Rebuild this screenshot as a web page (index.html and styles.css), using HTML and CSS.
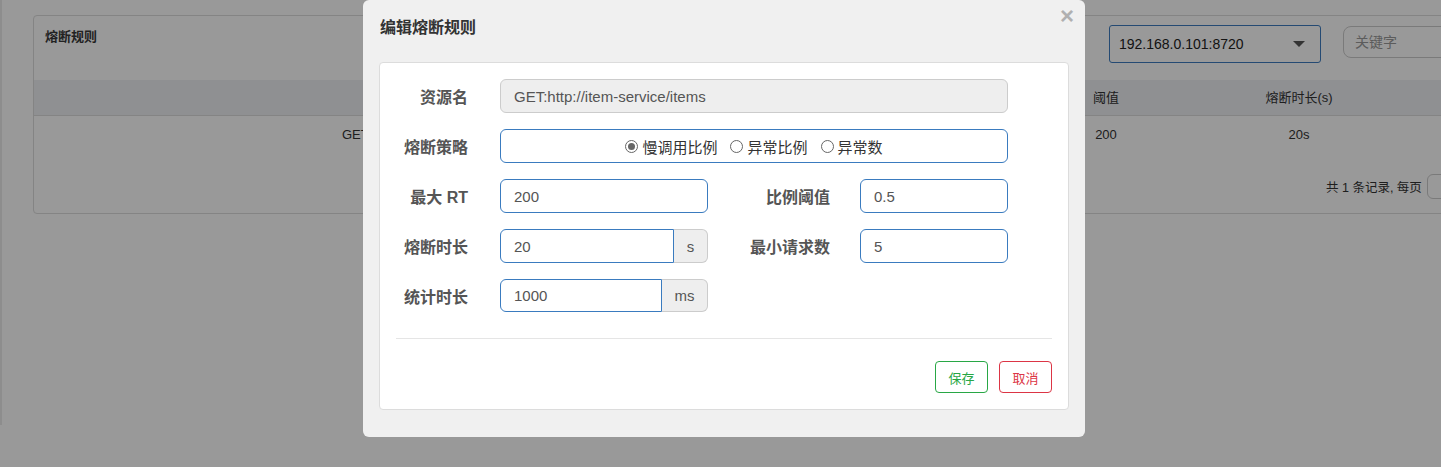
FILE: index.html
```html
<!DOCTYPE html>
<html lang="zh">
<head>
<meta charset="utf-8">
<title>编辑熔断规则</title>
<link rel="stylesheet" href="styles.css">
</head>
<body>
<div class="page">
  <div class="panel">
    <div class="panel-head">
      <div class="panel-title">熔断规则</div>
      <div class="machine-select"><span>192.168.0.101:8720</span><i class="caret"></i></div>
      <div class="search">关键字</div>
    </div>
    <div class="table">
      <div class="tr th">
        <div class="td"></div>
        <div class="td"></div>
        <div class="td">阈值</div>
        <div class="td">熔断时长(s)</div>
        <div class="td"></div>
      </div>
      <div class="tr">
        <div class="td">GET:http://item-service/items</div>
        <div class="td"></div>
        <div class="td">200</div>
        <div class="td">20s</div>
        <div class="td"></div>
      </div>
    </div>
    <div class="pager">
      <span>共 1 条记录, 每页</span><span class="pager-box"></span>
    </div>
  </div>
</div>

<div class="overlay"></div>

<div class="modal">
  <div class="modal-head">
    <div class="modal-title">编辑熔断规则</div>
    <span class="close">×</span>
  </div>
  <div class="modal-box">
    <div class="form-row">
      <label class="lbl">资源名</label>
      <div class="input wide disabled">GET:http://item-service/items</div>
    </div>
    <div class="form-row">
      <label class="lbl">熔断策略</label>
      <div class="input wide radios">
        <span class="radio checked"><i></i>慢调用比例</span>
        <span class="radio"><i></i>异常比例</span>
        <span class="radio"><i></i>异常数</span>
      </div>
    </div>
    <div class="form-row">
      <label class="lbl">最大 RT</label>
      <div class="group"><div class="input full">200</div></div>
      <label class="lbl2">比例阈值</label>
      <div class="input small">0.5</div>
    </div>
    <div class="form-row">
      <label class="lbl">熔断时长</label>
      <div class="group"><div class="input full join">20</div><span class="addon s">s</span></div>
      <label class="lbl2">最小请求数</label>
      <div class="input small">5</div>
    </div>
    <div class="form-row">
      <label class="lbl">统计时长</label>
      <div class="group"><div class="input full join">1000</div><span class="addon ms">ms</span></div>
    </div>
    <div class="sep"></div>
    <div class="actions">
      <button class="btn save">保存</button>
      <button class="btn cancel">取消</button>
    </div>
  </div>
</div>
</body>
</html>
```

FILE: styles.css
```css
* { box-sizing: border-box; }
html, body { margin: 0; padding: 0; }
body {
  width: 1441px;
  height: 467px;
  overflow: hidden;
  background: #fff;
  font-family: "Liberation Sans", Arial, "Noto Sans CJK SC", sans-serif;
  color: #333;
  position: relative;
}
.page {
  height: 425px;
  border-left: 2px solid #ececec;
  padding: 15px 0 0 31px;
}
.panel {
  width: 1500px;
  height: 199px;
  border: 1px solid #dcdcdc;
  border-radius: 4px;
  display: flex;
  flex-direction: column;
}
.panel-head {
  height: 64px;
  display: grid;
  grid-template-columns: 1042px 212px 200px;
  column-gap: 22px;
  padding: 0 0 0 11px;
  align-items: start;
}
.panel-title {
  font-size: 13px;
  font-weight: bold;
  color: #3a3a3a;
  padding-top: 10px;
}
.machine-select {
  margin-top: 9px;
  height: 38px;
  border: 1px solid #3e7cc0;
  border-radius: 3px;
  display: flex;
  align-items: center;
  justify-content: space-between;
  padding: 0 15px 0 9px;
  font-size: 14px;
  color: #222;
}
.caret {
  width: 0; height: 0;
  border-left: 6px solid transparent;
  border-right: 6px solid transparent;
  border-top: 6px solid #555;
}
.search {
  margin-top: 10px;
  height: 32px;
  border: 1px solid #ccc;
  border-radius: 8px;
  padding: 0 11px;
  line-height: 30px;
  font-size: 14px;
  color: #999;
}
.table { font-size: 13px; color: #333; }
.tr {
  display: grid;
  grid-template-columns: 782px 194px 192px 194px 138px;
  text-align: center;
}
.th {
  height: 36px;
  line-height: 36px;
  background: #eef0f3;
  border-bottom: 1px solid #dcdcdc;
}
.tr:not(.th) { height: 38px; line-height: 38px; }
.pager {
  margin-top: 20px;
  padding-left: 1292px;
  display: flex;
  align-items: center;
  font-size: 12.5px;
  color: #333;
}
.pager-box {
  margin-left: 5px;
  width: 40px;
  height: 25px;
  border: 1px solid #ccc;
  border-radius: 6px;
}

.overlay {
  position: fixed;
  inset: 0;
  background: rgba(0, 0, 0, 0.4);
}

.modal {
  position: absolute;
  left: 363px;
  top: 0;
  width: 722px;
  height: 437px;
  background: #f0f0f0;
  border-radius: 6px;
  padding: 0 16px;
  font-family: "Liberation Sans", Arial, "Noto Sans CJK SC", sans-serif;
}
.modal-head {
  height: 62px;
  padding: 17px 0 0 1px;
}
.modal-title {
  font-size: 16px;
  font-weight: bold;
  line-height: 22px;
  color: #333;
}
.close {
  position: absolute;
  right: 11px;
  top: 2px;
  font-size: 24px;
  font-weight: bold;
  line-height: 28px;
  color: #b0b0b0;
}
.modal-box {
  background: #fff;
  border: 1px solid #dcdcdc;
  border-radius: 4px;
  height: 348px;
  padding: 16px 16px 0 0;
}
.form-row {
  display: flex;
  align-items: center;
  height: 34px;
  margin-bottom: 16px;
}
.form-row:nth-child(5) { height: 33px; margin-bottom: 0; }
.lbl {
  width: 88px;
  text-align: right;
  margin-right: 32px;
  font-size: 16px;
  font-weight: bold;
  color: #555;
}
.lbl2 {
  width: 122px;
  text-align: right;
  margin-right: 30px;
  font-size: 16px;
  font-weight: bold;
  color: #555;
}
.input {
  height: 100%;
  border: 1px solid #3a7bbf;
  border-radius: 6px;
  padding: 0 13px;
  display: flex;
  align-items: center;
  font-size: 15px;
  color: #555;
  background: #fff;
}
.wide { width: 508px; }
.small { width: 148px; }
.disabled { background: #eee; border-color: #ccc; }
.group { width: 208px; height: 100%; display: flex; }
.full { flex: 1; }
.join { border-top-right-radius: 0; border-bottom-right-radius: 0; }
.addon {
  height: 100%;
  display: flex;
  align-items: center;
  justify-content: center;
  background: #eee;
  border: 1px solid #ccc;
  border-left: 0;
  border-radius: 0 6px 6px 0;
  font-size: 15px;
  color: #555;
}
.addon.s { width: 34px; }
.addon.ms { width: 46px; }
.radios {
  justify-content: center;
  gap: 13px;
  color: #333;
  font-family: "Noto Sans CJK SC", sans-serif;
  font-size: 15px;
  padding: 0;
}
.radio { display: flex; align-items: center; }
.radio i {
  width: 13px;
  height: 13px;
  border: 1px solid #666;
  border-radius: 50%;
  margin-right: 4px;
  display: flex;
  align-items: center;
  justify-content: center;
}
.radio.checked i::after {
  content: "";
  width: 7px;
  height: 7px;
  border-radius: 50%;
  background: #666;
}
.sep {
  height: 1px;
  background: #e5e5e5;
  margin: 26px 0 0 16px;
}
.actions {
  display: flex;
  justify-content: flex-end;
  gap: 11px;
  margin-top: 22px;
}
.btn {
  width: 53px;
  height: 32px;
  background: #fff;
  border-radius: 4px;
  font-family: "Noto Sans CJK SC", sans-serif;
  font-size: 13px;
  padding: 0;
}
.save { border: 1px solid #28a745; color: #28a745; }
.cancel { border: 1px solid #dc3545; color: #dc3545; }
```
